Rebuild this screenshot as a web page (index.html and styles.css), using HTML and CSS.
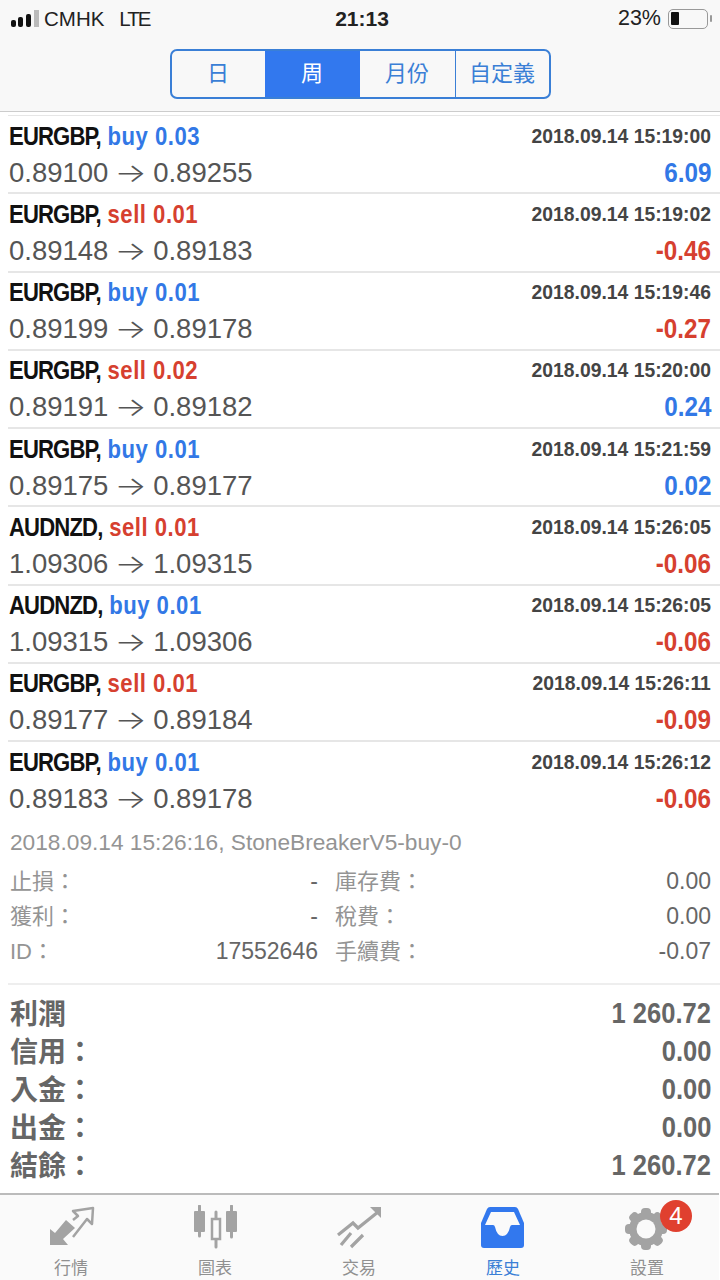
FILE: index.html

```html
<!DOCTYPE html>
<html lang="zh-Hant">
<head>
  <meta charset="UTF-8">
  <title>歷史</title>
  <link rel="stylesheet" href="styles.css">
</head>
<body>

<div class="status">
  <div class="status-left">
    <span class="signal"><i></i><i></i><i></i><i class="off"></i></span>
    <span class="carrier">CMHK</span><span class="lte">LTE</span>
  </div>
  <div class="status-time">21:13</div>
  <div class="status-right">
    <span>23%</span>
    <span class="battery"><i></i></span>
  </div>
</div>

<div class="header">
  <div class="tabs">
    <div class="tab">日</div>
    <div class="tab active">周</div>
    <div class="tab">月份</div>
    <div class="tab">自定義</div>
  </div>
</div>

<div class="list">
  <div class="row">
    <div class="line"><span class="title"><span class="sym">EURGBP,</span> <b class="blue">buy 0.03</b></span><span class="date">2018.09.14 15:19:00</span></div>
    <div class="line"><span class="price">0.89100 <span class="arrow">→</span> 0.89255</span><span class="profit blue">6.09</span></div>
  </div>
  <div class="row">
    <div class="line"><span class="title"><span class="sym">EURGBP,</span> <b class="red">sell 0.01</b></span><span class="date">2018.09.14 15:19:02</span></div>
    <div class="line"><span class="price">0.89148 <span class="arrow">→</span> 0.89183</span><span class="profit red">-0.46</span></div>
  </div>
  <div class="row">
    <div class="line"><span class="title"><span class="sym">EURGBP,</span> <b class="blue">buy 0.01</b></span><span class="date">2018.09.14 15:19:46</span></div>
    <div class="line"><span class="price">0.89199 <span class="arrow">→</span> 0.89178</span><span class="profit red">-0.27</span></div>
  </div>
  <div class="row">
    <div class="line"><span class="title"><span class="sym">EURGBP,</span> <b class="red">sell 0.02</b></span><span class="date">2018.09.14 15:20:00</span></div>
    <div class="line"><span class="price">0.89191 <span class="arrow">→</span> 0.89182</span><span class="profit blue">0.24</span></div>
  </div>
  <div class="row">
    <div class="line"><span class="title"><span class="sym">EURGBP,</span> <b class="blue">buy 0.01</b></span><span class="date">2018.09.14 15:21:59</span></div>
    <div class="line"><span class="price">0.89175 <span class="arrow">→</span> 0.89177</span><span class="profit blue">0.02</span></div>
  </div>
  <div class="row">
    <div class="line"><span class="title"><span class="sym">AUDNZD,</span> <b class="red">sell 0.01</b></span><span class="date">2018.09.14 15:26:05</span></div>
    <div class="line"><span class="price">1.09306 <span class="arrow">→</span> 1.09315</span><span class="profit red">-0.06</span></div>
  </div>
  <div class="row">
    <div class="line"><span class="title"><span class="sym">AUDNZD,</span> <b class="blue">buy 0.01</b></span><span class="date">2018.09.14 15:26:05</span></div>
    <div class="line"><span class="price">1.09315 <span class="arrow">→</span> 1.09306</span><span class="profit red">-0.06</span></div>
  </div>
  <div class="row">
    <div class="line"><span class="title"><span class="sym">EURGBP,</span> <b class="red">sell 0.01</b></span><span class="date">2018.09.14 15:26:11</span></div>
    <div class="line"><span class="price">0.89177 <span class="arrow">→</span> 0.89184</span><span class="profit red">-0.09</span></div>
  </div>
  <div class="row open">
    <div class="line"><span class="title"><span class="sym">EURGBP,</span> <b class="blue">buy 0.01</b></span><span class="date">2018.09.14 15:26:12</span></div>
    <div class="line"><span class="price">0.89183 <span class="arrow">→</span> 0.89178</span><span class="profit red">-0.06</span></div>
  </div>
  <div class="detail">
    <div class="detail-head">2018.09.14 15:26:16, StoneBreakerV5-buy-0</div>
    <div class="detail-grid">
      <span class="key">止損：</span><span class="val">-</span><span class="key">庫存費：</span><span class="val">0.00</span>
      <span class="key">獲利：</span><span class="val">-</span><span class="key">稅費：</span><span class="val">0.00</span>
      <span class="key">ID：</span><span class="val">17552646</span><span class="key">手續費：</span><span class="val">-0.07</span>
    </div>
  </div>
</div>

<div class="summary">
  <div class="sum-row"><span class="label">利潤</span><span class="num">1 260.72</span></div>
  <div class="sum-row"><span class="label">信用：</span><span class="num">0.00</span></div>
  <div class="sum-row"><span class="label">入金：</span><span class="num">0.00</span></div>
  <div class="sum-row"><span class="label">出金：</span><span class="num">0.00</span></div>
  <div class="sum-row"><span class="label">結餘：</span><span class="num">1 260.72</span></div>
</div>

<div class="tabbar">
  <div class="bar-item">
    <svg width="48" height="44" viewBox="0 0 48 44">
      <path d="M3 40 V24 L8 28 L19 15 L28 23 L16 34 L21 40 Z" fill="#a3a3a3"/>
      <path d="M26 15 L31 11 L26 6 L46 3 L45 19 L40 14 L26 32" fill="none" stroke="#a3a3a3" stroke-width="2.5" stroke-linejoin="round"/>
    </svg>
    <span>行情</span>
  </div>
  <div class="bar-item">
    <svg width="48" height="44" viewBox="0 0 48 44">
      <path d="M8.5 1 V31 M25 7 V42 M40.5 1 V32" stroke="#a3a3a3" stroke-width="3" stroke-linecap="round"/>
      <rect x="3" y="6" width="11" height="21" rx="1" fill="#a3a3a3"/>
      <rect x="21" y="14" width="8" height="20" fill="#fafafa" stroke="#a3a3a3" stroke-width="2.5"/>
      <rect x="35" y="6" width="11" height="21" rx="1" fill="#a3a3a3"/>
    </svg>
    <span>圖表</span>
  </div>
  <div class="bar-item">
    <svg width="48" height="44" viewBox="0 0 48 44">
      <path d="M3 30 L18 18 L23 23 L43 7 M6 40 L16 28 M16 42 L28 30" fill="none" stroke="#a3a3a3" stroke-width="3.2"/>
      <path d="M35 2 H46 V13 Z" fill="#a3a3a3"/>
    </svg>
    <span>交易</span>
  </div>
  <div class="bar-item on">
    <svg width="48" height="44" viewBox="0 0 48 44">
      <path d="M11 2 H36 Q38 2 39 4 L45 18 Q45 19 45 21 V40 Q45 43 42 43 H5 Q2 43 2 40 V21 Q2 19 2 18 L8 4 Q9 2 11 2 Z" fill="#3278ee"/>
      <path d="M12 7 H35 L41 20 H33 Q31.500 20 31 22 Q29 31 23.500 31 Q18 31 16 22 Q15.500 20 14 20 H6 Z" fill="#fafafa"/>
    </svg>
    <span>歷史</span>
  </div>
  <div class="bar-item">
    <span class="gear-wrap">
      <svg width="48" height="46" viewBox="0 0 48 46">
        <g fill="#a3a3a3">
          <circle cx="23" cy="24" r="17"/>
          <rect x="18" y="3" width="10" height="42" rx="4"/>
          <rect x="18" y="3" width="10" height="42" rx="4" transform="rotate(45 23 24)"/>
          <rect x="18" y="3" width="10" height="42" rx="4" transform="rotate(90 23 24)"/>
          <rect x="18" y="3" width="10" height="42" rx="4" transform="rotate(135 23 24)"/>
        </g>
        <circle cx="23" cy="24" r="9.500" fill="#fafafa"/>
      </svg>
      <b class="badge">4</b>
    </span>
    <span>設置</span>
  </div>
</div>

</body>
</html>
```

FILE: styles.css

```css
* { box-sizing: border-box; }
html, body { margin: 0; padding: 0; }
body { width: 720px; height: 1280px; overflow: hidden; background: #fff; font-family: "Liberation Sans", "Noto Sans CJK TC", sans-serif; color: #555; position: relative; }

.blue { color: #3278e6; }
.red { color: #d6402f; }

.status { height: 37px; background: #f8f8f8; display: flex; align-items: center; justify-content: space-between; padding: 0 9px 0 11px; font-size: 21px; color: #222; position: relative; }
.status-left, .status-right { display: flex; align-items: center; }
.carrier { margin-left: 5px; font-size: 20.5px; }
.lte { margin-left: 15px; font-size: 20.5px; letter-spacing: -2px; }
.status-time { position: absolute; left: 4px; right: 0; text-align: center; font-weight: bold; pointer-events: none; }
.status-right span:first-child { font-size: 21.5px; }
.signal { display: flex; align-items: flex-end; gap: 2px; height: 17px; }
.signal i { width: 5px; background: #111; border-radius: 2px; }
.signal i:nth-child(1) { height: 7px; }
.signal i:nth-child(2) { height: 10px; }
.signal i:nth-child(3) { height: 13px; margin-left: 1px; }
.signal i:nth-child(4) { height: 17px; margin-left: 1px; border-radius: 0; }
.signal i.off { background: #bbb; }
.battery { width: 40px; height: 20px; margin: 0 3px 0 7px; border: 1.5px solid #999; border-radius: 5px; padding: 2px; display: block; position: relative; }
.battery i { display: block; width: 8px; height: 13px; background: #111; border-radius: 1px; }
.battery::after { content: ""; position: absolute; right: -5px; top: 5px; width: 2px; height: 7px; background: #999; border-radius: 1px; }

.header { height: 75px; background: #f8f8f8; border-bottom: 1px solid #ccc; display: flex; justify-content: center; padding-top: 12px; }
.tabs { display: flex; height: 50px; width: 381px; border: 2px solid #3a7fd6; border-radius: 7px; overflow: hidden; }
.tab { width: 96px; display: flex; align-items: center; justify-content: center; padding-bottom: 6px; font-size: 22px; color: #3a7fd6; border-right: 1.5px solid #3a7fd6; }
.tab:first-child { width: 93px; border-right: none; }
.tab:last-child { border-right: none; flex: 1; }
.tab.active { width: 95px; background: #3278ee; color: #fff; border-right: none; }

.list { margin: 3px 0 0 8px; border-top: 1.5px solid #e6e6e6; }
.row { height: 78.25px; padding: 1.5px 9px 0 1px; border-bottom: 2px solid #e6e6e6; }
.row.open { border-bottom: none; }
.line { display: flex; justify-content: space-between; align-items: center; height: 36px; }
.title { margin-top: 1px; font-size: 26px; font-weight: bold; color: #111; letter-spacing: .6px; transform: scaleX(.85); transform-origin: left; white-space: nowrap; }
.sym { letter-spacing: -1px; }
.title b { font-weight: bold; }
.date { font-size: 21px; font-weight: bold; color: #444; transform: scaleX(.92); transform-origin: right; white-space: nowrap; }
.price { margin-top: 2px; font-size: 27.5px; line-height: 30px; color: #555; white-space: nowrap; }
.arrow { display: inline-block; width: 29.5px; text-align: center; font-family: "Inter", sans-serif; font-size: 26px; font-weight: 300; line-height: 0; transform: scaleX(1.3); }
.profit { margin-top: 1px; font-size: 28.5px; font-weight: bold; transform: scaleX(.85); transform-origin: right; }

.detail { height: 165px; padding: 5px 9px 0 2px; border-bottom: 2px solid #eee; color: #949494; }
.detail-head { font-size: 22.7px; height: 34px; line-height: 34px; white-space: nowrap; }
.detail-grid { display: grid; grid-template-columns: 100px 208px 120px 1fr; grid-auto-rows: 35px; align-items: center; margin-top: 3.5px; font-size: 22px; }
.detail-grid .val { text-align: right; padding-top: 2px; font-size: 23px; color: #666; }
.detail-grid .key { padding-bottom: 2px; }
.detail-grid .key:nth-child(4n+3) { padding-left: 17px; }

.summary { padding: 9px 9px 0 10px; }
.sum-row { display: flex; justify-content: space-between; align-items: center; height: 38px; font-size: 28px; font-weight: bold; color: #666; }
.label { margin-bottom: 2px; }
.num { margin-top: 1px; font-size: 29px; transform: scaleX(.88); transform-origin: right; }

.tabbar { position: absolute; left: -1px; right: 1px; top: 1193px; height: 87px; background: #fafafa; border-top: 2px solid #bbb; display: flex; padding-top: 10px; }
.bar-item { width: 144px; display: flex; flex-direction: column; align-items: center; font-size: 17px; color: #909090; gap: 5px; }
.bar-item.on span { color: #3a7fd6; }
.gear-wrap { position: relative; display: block; width: 48px; height: 44px; }
.gear-wrap svg { display: block; }
.badge { position: absolute; top: -5px; left: 37px; width: 32px; height: 32px; border-radius: 50%; background: #e0402f; color: #fff; font-size: 24px; font-weight: normal; display: flex; align-items: center; justify-content: center; }
```
